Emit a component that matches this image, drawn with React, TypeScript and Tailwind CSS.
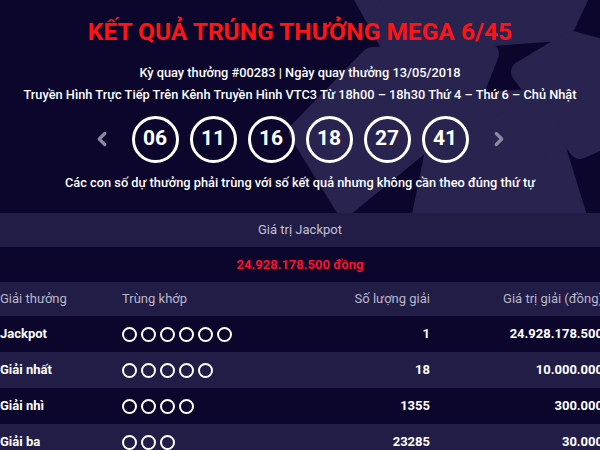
import { ChevronLeft, ChevronRight } from 'lucide-react'

const balls = ['06', '11', '16', '18', '27', '41']

const prizes = [
  { name: 'Jackpot', match: 6, count: '1', value: '24.928.178.500' },
  { name: 'Giải nhất', match: 5, count: '18', value: '10.000.000' },
  { name: 'Giải nhì', match: 4, count: '1355', value: '300.000' },
  { name: 'Giải ba', match: 3, count: '23285', value: '30.000' },
]

// Hoa văn quả bóng mờ phía sau phần tiêu đề
function BallPattern() {
  const panels = [
    '350,-30 590,-30 562,30 390,42',
    '522,72 572,42 620,55 620,130 580,148',
    '500,102 540,100 580,230 420,230 440,132',
    '300,132 372,58 488,54 468,104 345,205',
  ]
  return (
    <svg className="absolute left-0 top-0" width="600" height="213" viewBox="0 0 600 213">
      {panels.map((p, i) => (
        <polygon key={i} points={p} fill="#29234f" stroke="#29234f" strokeWidth="22" strokeLinejoin="round" />
      ))}
    </svg>
  )
}

export default function App() {
  return (
    <div className="relative h-[450px] w-[600px] overflow-hidden bg-[#0c062d] font-['Roboto',sans-serif]">
      <BallPattern />

      <div className="relative flex flex-col items-center pt-[18px]">
        <h1 className="h-[28px] text-[24.5px] font-bold leading-[28px] text-[#ff1414]">
          KẾT QUẢ TRÚNG THƯỞNG MEGA 6/45
        </h1>
        <p className="mt-[16px] h-[22px] text-[12.8px] font-medium leading-[22px] text-white">
          Kỳ quay thưởng #00283 | Ngày quay thưởng 13/05/2018
        </p>
        <p className="h-[22px] whitespace-nowrap text-[12.8px] font-medium leading-[22px] text-white">
          Truyền Hình Trực Tiếp Trên Kênh Truyền Hình VTC3 Từ 18h00 – 18h30 Thứ 4 – Thứ 6 – Chủ Nhật
        </p>

        <div className="mt-[9px] flex h-[48px] items-center">
          <ChevronLeft size={22} strokeWidth={3.5} className="mr-[19px] text-[#8b889f]" />
          <div className="flex gap-[11px]">
            {balls.map((b) => (
              <div
                key={b}
                className="flex h-[47px] w-[47px] items-center justify-center rounded-full border-[3px] border-white text-[21px] font-bold text-white"
              >
                {b}
              </div>
            ))}
          </div>
          <ChevronRight size={22} strokeWidth={3.5} className="ml-[19px] text-[#8b889f]" />
        </div>

        <p className="mt-[9px] h-[22px] text-[12.8px] font-medium leading-[22px] text-white">
          Các con số dự thưởng phải trùng với số kết quả nhưng không cần theo đúng thứ tự
        </p>
      </div>

      {/* Giá trị Jackpot */}
      <div className="relative mt-[19px]">
        <div className="flex h-[34px] items-center justify-center bg-[#221d46] text-[13px] text-[#c3c1d2]">
          Giá trị Jackpot
        </div>
        <div className="flex h-[35px] items-center justify-center text-[13px] font-bold text-[#ff1030]">
          24.928.178.500 đồng
        </div>

        {/* Bảng giải thưởng */}
        <div className="grid h-[34px] w-[603px] grid-cols-[122px_200px_108px_173px] items-center bg-[#221d46] text-[13px] text-[#b9b7ca]">
          <span>Giải thưởng</span>
          <span>Trùng khớp</span>
          <span className="text-right">Số lượng giải</span>
          <span className="text-right">Giá trị giải (đồng)</span>
        </div>
        {prizes.map((p, i) => (
          <div
            key={p.name}
            className={`grid h-[36px] w-[603px] grid-cols-[122px_200px_108px_173px] items-center text-[13px] font-bold text-white ${
              i % 2 === 1 ? 'bg-[#221d46]' : 'bg-[#0c062d]'
            }`}
          >
            <span>{p.name}</span>
            <span className="flex gap-[4px]">
              {Array.from({ length: p.match }).map((_, k) => (
                <span key={k} className="h-[15px] w-[15px] rounded-full border-[2.5px] border-white" />
              ))}
            </span>
            <span className="text-right">{p.count}</span>
            <span className="text-right">{p.value}</span>
          </div>
        ))}
      </div>
    </div>
  )
}
